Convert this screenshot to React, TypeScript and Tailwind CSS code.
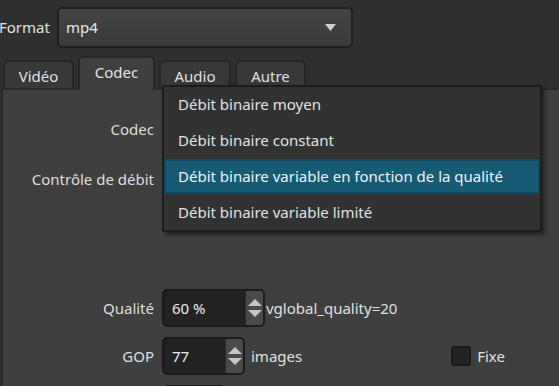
import React from "react";

const font = { fontFamily: '"Noto Sans", "Open Sans", sans-serif' };

function Tab({ label, selected, width }: { label: string; selected?: boolean; width: string }) {
  if (selected) {
    return (
      <div
        className={`${width} h-[34px] -mb-[2px] z-10 flex items-start justify-center pt-[7px] rounded-t-[5px] border-2 border-b-0 border-[#262626] bg-[#3f3f3f] text-[#e4e4e4]`}
      >
        {label}
      </div>
    );
  }
  return (
    <div
      className={`${width} h-[28px] flex items-start justify-center pt-[7px] rounded-t-[5px] border-2 border-b-0 border-[#262626] bg-[#383838] text-[#e0e0e0]`}
    >
      {label}
    </div>
  );
}

function SpinBox({ value, width }: { value: string; width: string }) {
  return (
    <div
      className={`${width} h-[38px] flex rounded-[5px] border-2 border-[#1b1b1b] bg-[#222222] overflow-hidden`}
    >
      <div className="flex-1 flex items-center pl-[8px] text-[#ececec]">{value}</div>
      <div className="w-[18px] flex flex-col items-center justify-center gap-[4px] bg-[#4a4a4a] border-l border-[#2a2a2a]">
        <svg width="14" height="7" viewBox="0 0 14 7">
          <polygon points="7,0 14,7 0,7" fill="#c6c6c6" />
        </svg>
        <svg width="14" height="7" viewBox="0 0 14 7">
          <polygon points="0,0 14,0 7,7" fill="#c6c6c6" />
        </svg>
      </div>
    </div>
  );
}

function Label({ children }: { children: React.ReactNode }) {
  return <div className="w-[151px] shrink-0 text-right text-[#dedede]">{children}</div>;
}

export default function App() {
  const items = [
    "Débit binaire moyen",
    "Débit binaire constant",
    "Débit binaire variable en fonction de la qualité",
    "Débit binaire variable limité",
  ];

  return (
    <div
      className="relative w-[559px] h-[386px] overflow-hidden bg-[#2f2f2f] text-[15px] leading-none"
      style={font}
    >
      {/* Format row */}
      <div className="flex items-center pt-[7px] h-[48px]">
        <div className="w-[58px] shrink-0 text-[#e2e2e2] -ml-[1px]">Format</div>
        <div className="w-[296px] h-[41px] flex items-center justify-between pl-[7px] pr-[15px] rounded-[5px] border-2 border-[#1e1e1e] bg-gradient-to-b from-[#444444] to-[#3a3a3a] text-[#e8e8e8]">
          <span>mp4</span>
          <svg width="11" height="7" viewBox="0 0 11 7">
            <polygon points="0,0 11,0 5.5,7" fill="#cfcfcf" />
          </svg>
        </div>
      </div>

      {/* Tabs */}
      <div className="flex items-end gap-[4px] pl-[3px] mt-[8px] h-[32px]">
        <Tab label="Vidéo" width="w-[71px]" />
        <Tab label="Codec" width="w-[77px]" selected />
        <Tab label="Audio" width="w-[72px]" />
        <Tab label="Autre" width="w-[71px]" />
      </div>

      {/* Panel */}
      <div className="ml-[1px] w-[600px] h-[400px] bg-[#3f3f3f] border-t-2 border-l-2 border-[#2a2a2a] pt-[20px]">
        <div className="flex items-center gap-[8px] h-[38px]">
          <Label>Codec</Label>
          <div className="w-[300px] h-[38px] rounded-[5px] border-2 border-[#1e1e1e] bg-[#404040]" />
        </div>
        <div className="flex items-center gap-[8px] h-[38px] mt-[12px]">
          <Label>Contrôle de débit</Label>
          <div className="w-[300px] h-[38px] rounded-[5px] border-2 border-[#1e1e1e] bg-[#404040]" />
        </div>

        <div className="flex items-center h-[38px] mt-[91px]">
          <Label>Qualité</Label>
          <div className="ml-[8px]">
            <SpinBox value="60 %" width="w-[103px]" />
          </div>
          <span className="ml-[1px] text-[#e0e0e0]">vglobal_quality=20</span>
        </div>

        <div className="flex items-center h-[38px] mt-[10px]">
          <Label>GOP</Label>
          <div className="ml-[8px]">
            <SpinBox value="77" width="w-[83px]" />
          </div>
          <span className="ml-[6px] text-[#e0e0e0]">images</span>
          <div className="ml-[149px] w-[20px] h-[20px] rounded-[3px] border-2 border-[#1b1b1b] bg-[#232323]" />
          <span className="ml-[6px] text-[#e0e0e0]">Fixe</span>
        </div>

        <div className="flex items-center mt-[10px]">
          <div className="w-[151px]" />
          <div className="ml-[8px] w-[63px] h-[38px] rounded-[5px] border-2 border-[#1b1b1b] bg-[#222222]" />
        </div>
      </div>

      {/* Dropdown popup */}
      <div className="absolute left-[162px] top-[85px] w-[380px] h-[147px] bg-[#323232] border-2 border-[#1c1c1c] shadow-[3px_3px_4px_rgba(0,0,0,0.45)] flex flex-col justify-center">
        {items.map((it, i) => (
          <div
            key={it}
            className={
              i === 2
                ? "h-[36px] flex items-center pl-[12px] bg-[#175a74] border-2 border-[#0f4a60] text-[#f2f2f2]"
                : "h-[36px] flex items-center pl-[14px] text-[#e2e2e2]"
            }
          >
            {it}
          </div>
        ))}
      </div>
    </div>
  );
}
